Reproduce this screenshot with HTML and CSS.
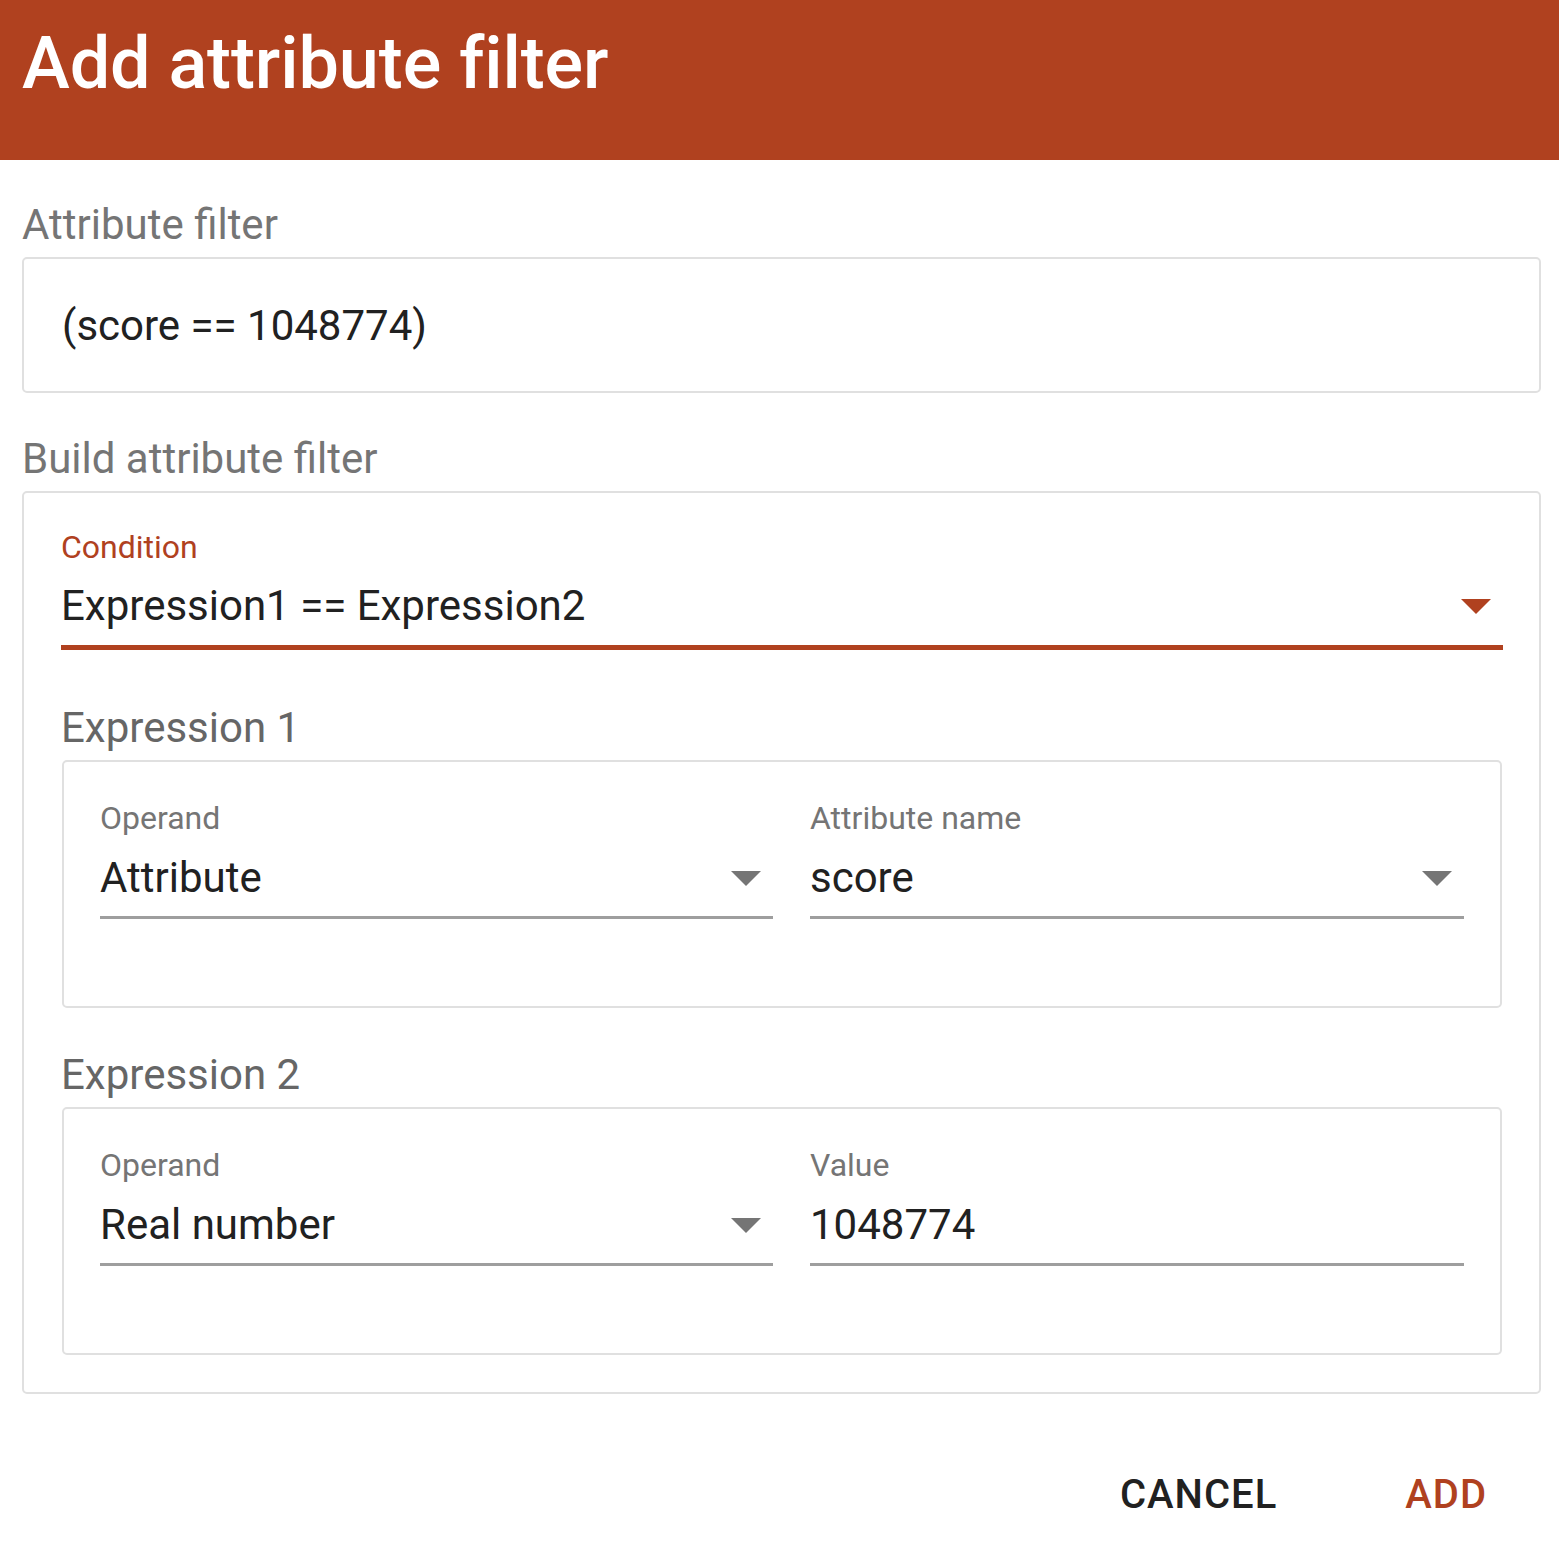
FILE: index.html
```html
<!DOCTYPE html>
<html>
<head>
<meta charset="utf-8">
<link rel="stylesheet" href="styles.css">
</head>
<body>
<div class="dialog">
  <header class="title-bar"><h1 class="title">Add attribute filter</h1></header>
  <main class="content">
    <div class="section-label first">Attribute filter</div>
    <div class="box filter-box"><span class="filter-text">(score == 1048774)</span></div>

    <div class="section-label">Build attribute filter</div>
    <div class="box build-box">
      <div class="field condition">
        <div class="field-label active">Condition</div>
        <div class="field-input active">
          <span class="value">Expression1 == Expression2</span>
          <svg class="arrow" width="30" height="15" viewBox="0 0 30 15"><path d="M0 0h30L15 15z"/></svg>
        </div>
      </div>

      <div class="sub-label first">Expression 1</div>
      <div class="box expr-box">
        <div class="field col-a">
          <div class="field-label">Operand</div>
          <div class="field-input">
            <span class="value">Attribute</span>
            <svg class="arrow" width="30" height="15" viewBox="0 0 30 15"><path d="M0 0h30L15 15z"/></svg>
          </div>
        </div>
        <div class="field col-b">
          <div class="field-label">Attribute name</div>
          <div class="field-input">
            <span class="value">score</span>
            <svg class="arrow" width="30" height="15" viewBox="0 0 30 15"><path d="M0 0h30L15 15z"/></svg>
          </div>
        </div>
      </div>

      <div class="sub-label">Expression 2</div>
      <div class="box expr-box">
        <div class="field col-a">
          <div class="field-label">Operand</div>
          <div class="field-input">
            <span class="value">Real number</span>
            <svg class="arrow" width="30" height="15" viewBox="0 0 30 15"><path d="M0 0h30L15 15z"/></svg>
          </div>
        </div>
        <div class="field col-b">
          <div class="field-label">Value</div>
          <div class="field-input">
            <span class="value">1048774</span>
          </div>
        </div>
      </div>
    </div>
  </main>
  <footer class="actions">
    <button class="btn cancel">CANCEL</button>
    <button class="btn add">ADD</button>
  </footer>
</div>
</body>
</html>
```
FILE: styles.css
```css
html, body {
  margin: 0;
  padding: 0;
  background: #ffffff;
}
body {
  font-family: Roboto, "Liberation Sans", Arial, sans-serif;
  color: #212121;
}
.dialog {
  width: 1559px;
}
.title-bar {
  background: #b0411f;
  height: 160px;
  box-sizing: border-box;
  padding: 22px 0 0 22px;
}
.title {
  margin: 0;
  color: #ffffff;
  font-size: 72px;
  font-weight: 500;
  line-height: 84px;
  letter-spacing: -0.1px;
}
.content {
  padding: 0 18px 0 22px;
}
.section-label {
  font-size: 42px;
  line-height: 48px;
  color: #757575;
  margin-top: 42px;
  margin-bottom: 8px;
}
.section-label.first {
  margin-top: 41px;
}
.box {
  border: 2px solid #e0e0e0;
  border-radius: 5px;
  box-sizing: border-box;
}
.filter-box {
  height: 136px;
  display: flex;
  align-items: center;
  padding-left: 38px;
}
.filter-text {
  font-size: 42px;
}
.build-box {
  padding: 36px 36px 37px 37px;
}
.field-label {
  font-size: 32px;
  line-height: 36px;
  color: #757575;
}
.field-label.active {
  color: #b0411f;
}
.field-input {
  display: flex;
  align-items: center;
  justify-content: space-between;
  border-bottom: 3px solid #9e9e9e;
  height: 83px;
  box-sizing: border-box;
  padding-top: 4px;
}
.field-input.active {
  border-bottom: 5px solid #b0411f;
  height: 85px;
  padding-top: 2px;
}
.value {
  font-size: 42px;
  line-height: 50px;
}
.arrow {
  fill: #757575;
  margin-right: 12px;
}
.field-input.active .arrow {
  fill: #b0411f;
}
.sub-label {
  font-size: 42px;
  line-height: 48px;
  color: #666666;
  margin-top: 43px;
  margin-bottom: 8px;
}
.sub-label.first {
  margin-top: 54px;
}
.expr-box {
  display: flex;
  gap: 37px;
  margin: 0 1px;
  padding: 38px 36px 87px 36px;
}
.col-a {
  width: 673px;
}
.col-b {
  width: 654px;
}
.actions {
  display: flex;
  justify-content: flex-end;
  gap: 128px;
  padding: 77px 72px 0 0;
}
.btn {
  background: none;
  border: 0;
  padding: 0;
  font-family: Roboto, "Liberation Sans", Arial, sans-serif;
  font-size: 40px;
  font-weight: 500;
  letter-spacing: 1px;
  color: #212121;
}
.btn.add {
  color: #b0411f;
}
```
